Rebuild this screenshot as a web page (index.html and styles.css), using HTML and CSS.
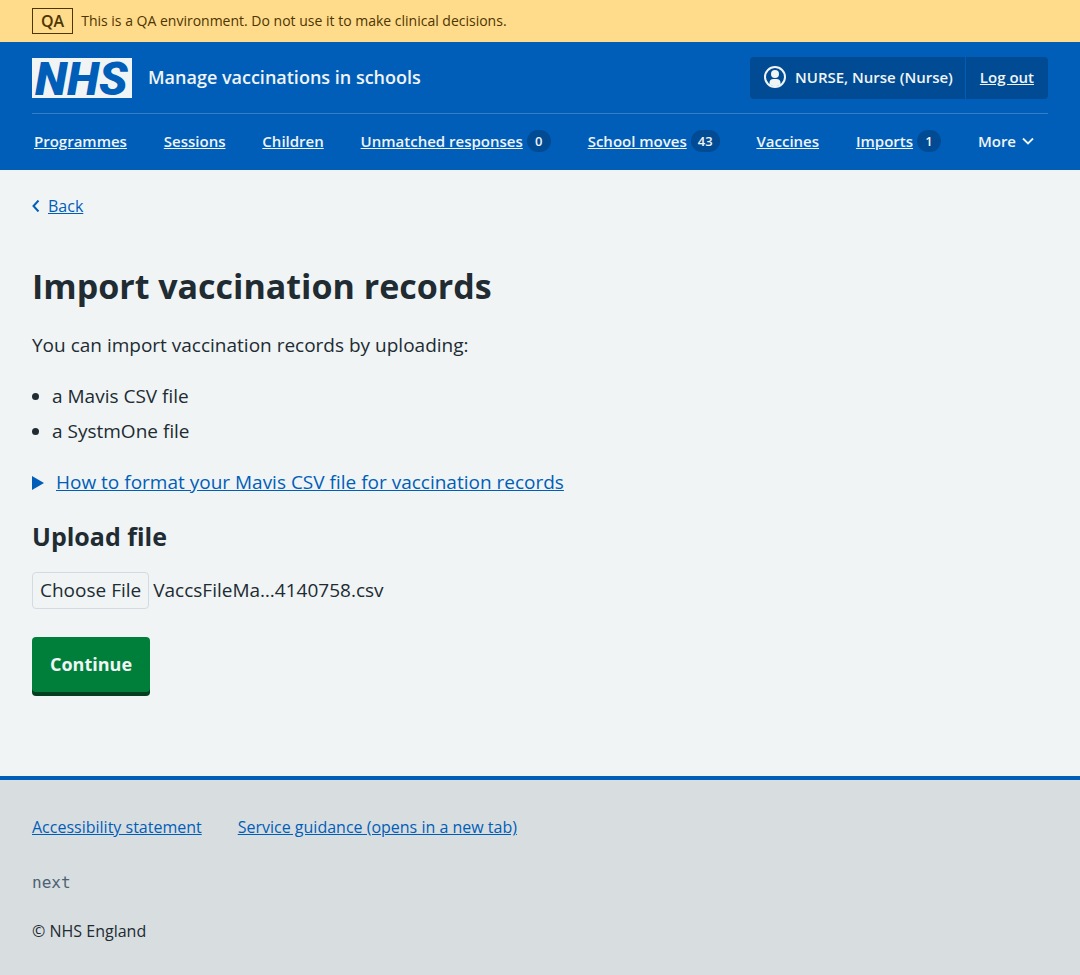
FILE: index.html
```html
<!DOCTYPE html>
<html lang="en">
<head>
<meta charset="utf-8">
<meta name="viewport" content="width=device-width, initial-scale=1">
<title>Import vaccination records</title>
<link rel="stylesheet" href="styles.css">
</head>
<body>
<div class="environment">
  <strong class="environment-tag">QA</strong>
  <span>This is a QA environment. Do not use it to make clinical decisions.</span>
</div>
<header class="header">
  <div class="header-top">
    <a class="brand" href="#">
      <svg class="logo" viewBox="0 0 100 40" role="img" aria-label="NHS">
        <rect width="100" height="40" fill="#f0f4f5"/>
        <text class="logo-text" x="3" y="37">NHS</text>
      </svg>
      <span class="service">Manage vaccinations in schools</span>
    </a>
    <div class="account">
      <span class="account-user">
        <svg class="user-icon" viewBox="0 0 24 24" aria-hidden="true">
          <circle cx="12" cy="12" r="10" fill="none" stroke="#f0f4f5" stroke-width="2"/>
          <circle cx="12" cy="9" r="4" fill="#f0f4f5"/>
          <path d="M6.500 19.500v-1.500a4 4 0 0 1 4-4h3a4 4 0 0 1 4 4v1.500a10 10 0 0 1-11 0z" fill="#f0f4f5"/>
        </svg>
        NURSE, Nurse (Nurse)
      </span>
      <a class="logout" href="#">Log out</a>
    </div>
  </div>
  <nav class="nav" aria-label="Menu">
    <ul class="nav-list">
      <li><a href="#">Programmes</a></li>
      <li><a href="#">Sessions</a></li>
      <li><a href="#">Children</a></li>
      <li><a href="#">Unmatched responses</a><span class="count">0</span></li>
      <li><a href="#">School moves</a><span class="count">43</span></li>
      <li><a href="#">Vaccines</a></li>
      <li><a href="#">Imports</a><span class="count">1</span></li>
      <li><button class="more" type="button">More
        <svg class="more-icon" viewBox="0 0 12 8" aria-hidden="true"><path d="M1 1.500l5 5 5-5" fill="none" stroke="currentColor" stroke-width="1.800"/></svg>
      </button></li>
    </ul>
  </nav>
</header>
<main class="main">
  <a class="back" href="#">
    <svg class="back-icon" viewBox="0 0 8 12" aria-hidden="true"><path d="M6.500 .5L1.500 6l5 5.500" fill="none" stroke="currentColor" stroke-width="2"/></svg>
    <span class="back-text">Back</span>
  </a>
  <h1 class="title">Import vaccination records</h1>
  <p class="intro">You can import vaccination records by uploading:</p>
  <ul class="formats">
    <li>a Mavis CSV file</li>
    <li>a SystmOne file</li>
  </ul>
  <details class="details">
    <summary class="summary">
      <svg class="summary-icon" viewBox="0 0 12 14" aria-hidden="true"><path d="M0 0l12 7-12 7z" fill="currentColor"/></svg>
      <span class="summary-text">How to format your Mavis CSV file for vaccination records</span>
    </summary>
  </details>
  <form class="form">
    <h2 class="subtitle">Upload file</h2>
    <div class="upload">
      <input class="upload-input" type="file" id="file" accept=".csv">
      <label class="upload-button" for="file">Choose File</label>
      <output class="upload-name" for="file">VaccsFileMa…4140758.csv</output>
    </div>
    <button class="continue" type="submit">Continue</button>
  </form>
</main>
<footer class="footer">
  <ul class="footer-links">
    <li><a href="#">Accessibility statement</a></li>
    <li><a href="#">Service guidance (opens in a new tab)</a></li>
  </ul>
  <p class="version">next</p>
  <p class="copyright">© NHS England</p>
</footer>
</body>
</html>
```
FILE: styles.css
```css
* { box-sizing: border-box; }
body {
  margin: 0;
  min-height: 100vh;
  display: flex;
  flex-direction: column;
  background: #f0f4f5;
  color: #212b32;
  font: 19px/27px "Open Sans", "Noto Sans", sans-serif;
}
a { color: #005eb8; }
ul { list-style: none; margin: 0; padding: 0; }
.environment {
  display: flex;
  align-items: center;
  gap: 8px;
  padding: 8px 32px;
  background: #ffdb8c;
  color: #4d3600;
  font-size: 14px;
  line-height: 24px;
}
.environment-tag {
  border: 1px solid #4d3600;
  padding: 0 8px;
  font-size: 16px;
  font-weight: 600;
}
.header {
  background: #005eb8;
  padding: 0 32px;
  color: #f0f4f5;
  font-size: 15px;
  font-weight: 600;
  line-height: 24px;
}
.header a { color: #f0f4f5; }
.header-top {
  display: flex;
  justify-content: space-between;
  align-items: center;
  padding: 15px 0 14px;
  border-bottom: 1px solid #337ec6;
}
.header .brand {
  display: flex;
  align-items: center;
  gap: 16px;
  text-decoration: none;
}
.logo { width: 100px; height: 40px; overflow: visible; }
.logo-text {
  font: italic 900 47px Roboto, sans-serif;
  fill: #005eb8;
}
.service { padding-bottom: 2px; font-size: 18px; }
.account {
  display: flex;
  background: #004b93;
  border-radius: 4px;
}
.account-user {
  display: flex;
  align-items: center;
  gap: 8px;
  padding: 8px 12px 10px 13px;
  border-right: 1px solid #005eb8;
}
.user-icon { width: 24px; height: 24px; }
.logout { padding: 8px 14px 10px; }
.nav-list {
  display: flex;
  justify-content: space-between;
  padding: 15px 14px 17px 2px;
}
.nav-list li { display: flex; align-items: center; gap: 4px; }
.count {
  min-width: 24px;
  padding: 0 7px;
  border-radius: 12px;
  background: #004b93;
  font-size: 13px;
  line-height: 22px;
  text-align: center;
}
.more {
  display: flex;
  align-items: center;
  gap: 6px;
  padding: 0;
  border: 0;
  background: none;
  color: inherit;
  font: inherit;
}
.more-icon { width: 12px; height: 8px; }
.main { padding: 24px 32px 84px; }
.back {
  display: flex;
  width: fit-content;
  align-items: center;
  gap: 8px;
  font-size: 16px;
  line-height: 24px;
  text-decoration: none;
}
.back-icon { width: 8px; height: 12px; }
.back-text { text-decoration: underline; }
.title {
  margin: 44px 0 22px;
  font-size: 34px;
  font-weight: 700;
  line-height: 48px;
}
.intro { margin: 0 0 24px; }
.formats {
  list-style: disc;
  padding-left: 20px;
  margin-bottom: 24px;
}
.formats li + li { margin-top: 8px; }
.details { margin-bottom: 24px; }
.summary {
  display: flex;
  align-items: center;
  gap: 12px;
  color: #005eb8;
}
.summary-icon { width: 12px; height: 14px; }
.summary-text { text-decoration: underline; }
.subtitle {
  margin: 0 0 20px;
  font-size: 25px;
  font-weight: 700;
  line-height: 32px;
}
.upload {
  display: flex;
  align-items: center;
  gap: 4px;
  margin-bottom: 28px;
}
.upload-input {
  position: absolute;
  width: 1px;
  height: 1px;
  opacity: 0;
}
.upload-button {
  padding: 4px 7px;
  border: 1px solid #d3dae3;
  border-radius: 4px;
}
.continue {
  display: block;
  padding: 14px 18px;
  border: 0;
  border-radius: 4px;
  background: #007f3b;
  box-shadow: 0 4px 0 #00401e;
  color: #f0f4f5;
  font: 700 18px/27px "Open Sans", "Noto Sans", sans-serif;
}
.footer {
  flex: 1;
  padding: 35px 32px 32px;
  border-top: 4px solid #005eb8;
  background: #d8dde0;
  font-size: 16px;
  line-height: 24px;
}
.footer-links {
  display: flex;
  flex-wrap: wrap;
  gap: 8px 36px;
  margin-bottom: 32px;
}
.footer p { margin: 0 0 24px; }
.footer .version {
  color: #4c6272;
  font-family: "DejaVu Sans Mono", monospace;
}
.footer .copyright { margin: 0; }
```
